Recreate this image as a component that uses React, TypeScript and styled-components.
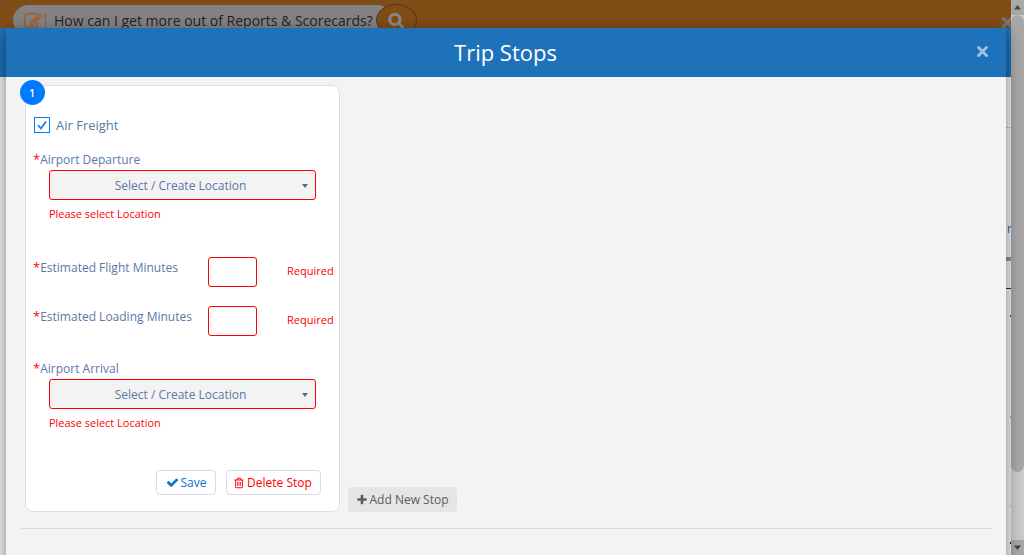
import React from 'react';
import styled, { createGlobalStyle } from 'styled-components';

const GlobalStyle = createGlobalStyle`
  * { box-sizing: border-box; }
  html, body { margin: 0; padding: 0; overflow: hidden; }
  body { font-family: "Open Sans", "Noto Sans", sans-serif; font-size: 12px; color: #5b78a5; }
  button, input { font-family: inherit; font-size: inherit; margin: 0; }
`;

const ICONS = {
  check:
    'M1671 566q0 40-28 68l-724 724-136 136q-28 28-68 28t-68-28l-136-136-362-362q-28-28-28-68t28-68l136-136q28-28 68-28t68 28l294 295 656-657q28-28 68-28t68 28l136 136q28 28 28 68z',
  plus:
    'M1600 736v192q0 40-28 68t-68 28h-416v416q0 40-28 68t-68 28h-192q-40 0-68-28t-28-68v-416h-416q-40 0-68-28t-28-68v-192q0-40 28-68t68-28h416v-416q0-40 28-68t68-28h192q40 0 68 28t28 68v416h416q40 0 68 28t28 68z',
  trash:
    'M704 736v576q0 14-9 23t-23 9h-64q-14 0-23-9t-9-23v-576q0-14 9-23t23-9h64q14 0 23 9t9 23zm256 0v576q0 14-9 23t-23 9h-64q-14 0-23-9t-9-23v-576q0-14 9-23t23-9h64q14 0 23 9t9 23zm256 0v576q0 14-9 23t-23 9h-64q-14 0-23-9t-9-23v-576q0-14 9-23t23-9h64q14 0 23 9t9 23zm128 724v-948h-896v948q0 22 7 40.5t14.5 27 10.5 8.5h832q3 0 10.5-8.5t14.5-27 7-40.5zm-672-1076h448l-48-117q-7-9-17-11h-317q-10 2-17 11zm928 32v64q0 14-9 23t-23 9h-96v948q0 83-47 143.5t-113 60.5h-832q-66 0-113-58.5t-47-141.5v-952h-96q-14 0-23-9t-9-23v-64q0-14 9-23t23-9h309l70-167q15-37 54-63t79-26h320q40 0 79 26t54 63l70 167h309q14 0 23 9t9 23z',
  search:
    'M1216 832q0-185-131.5-316.5t-316.5-131.5-316.5 131.5-131.5 316.5 131.5 316.5 316.5 131.5 316.5-131.5 131.5-316.5zm512 832q0 52-38 90t-90 38q-54 0-90-38l-343-342q-179 124-399 124-143 0-273.5-55.5t-225-150-150-225-55.5-273.5 55.5-273.5 150-225 225-150 273.5-55.5 273.5 55.5 225 150 150 225 55.5 273.5q0 220-124 399l343 343q37 37 37 90z',
  edit:
    'M888 1184l116-116-152-152-116 116v56h96v96h56zm440-720q-16-16-33 1l-350 350q-17 17-1 33t33-1l350-350q17-17 1-33zm80 594v190q0 119-84.5 203.5t-203.5 84.5h-832q-119 0-203.5-84.5t-84.5-203.5v-832q0-119 84.5-203.5t203.5-84.5h832q63 0 117 25 15 7 18 23 3 17-9 29l-49 49q-14 14-32 8-23-6-45-6h-832q-66 0-113 47t-47 113v832q0 66 47 113t113 47h832q66 0 113-47t47-113v-126q0-13 9-22l64-64q15-15 35-7t20 29zm-96-738l288 288-672 672h-288v-288zm444 132l-92 92-288-288 92-92q28-28 68-28t68 28l152 152q28 28 28 68t-28 68z',
};

const Svg = styled.svg`
  display: block;
  flex: none;
  overflow: visible;
  fill: currentColor;
`;

function Icon({ name, size, bold = 0 }: { name: keyof typeof ICONS; size: number; bold?: number }) {
  return (
    <Svg width={size} height={size} viewBox="0 0 1792 1792">
      <path d={ICONS[name]} stroke="currentColor" strokeWidth={bold} />
    </Svg>
  );
}

const CrossSvg = styled.svg`
  display: block;
  flex: none;
`;

function Cross({ color }: { color: string }) {
  return (
    <CrossSvg width="13" height="13" viewBox="0 0 13 13">
      <path d="M2.5 2.5l8 8M10.5 2.5l-8 8" stroke={color} strokeWidth="3" strokeLinecap="round" />
    </CrossSvg>
  );
}

const Window = styled.div`
  position: relative;
  display: flex;
  width: 1024px;
  height: 555px;
  overflow: hidden;
`;

const Page = styled.div`
  flex: 1;
  background: #f4f4f4;
`;

const SiteBar = styled.div`
  display: flex;
  height: 28px;
  padding: 4px 0 0 13px;
  background: #804d17;
  overflow: hidden;
`;

const SearchPill = styled.div`
  display: flex;
  align-items: center;
  width: 380px;
  height: 31px;
  margin-top: 1px;
  padding-left: 11px;
  border-radius: 16px;
  background: #838383;
  color: #a85f30;
`;

const SearchText = styled.span`
  margin-left: 7px;
  padding-left: 1px;
  font-size: 14px;
  line-height: 20px;
  color: #222;
  white-space: nowrap;
`;

const PillRule = styled.span`
  width: 1px;
  height: 16px;
  margin-left: 3px;
  background: #97603b;
`;

const SearchButton = styled.div`
  display: flex;
  flex: none;
  align-items: center;
  justify-content: center;
  width: 41px;
  height: 32px;
  margin-left: -17px;
  padding-right: 2px;
  border: 1px solid #5f3810;
  border-radius: 50%;
  background: #804d17;
  color: #8a8a8a;
`;

const SiteClose = styled.div`
  margin: 12px 0 0 auto;
  width: 10px;
`;

const BackHeader = styled.div`
  height: 49px;
  background: #1e72ba;
`;

const BackBody = styled.div`
  display: flex;
  flex-direction: column;
  align-items: flex-end;
  height: 478px;
`;

const BackMark = styled.div<{ $gap: number; $w: number; $h: number; $color: string }>`
  flex: none;
  width: ${(p) => p.$w}px;
  height: ${(p) => p.$h}px;
  margin-top: ${(p) => p.$gap}px;
  background: ${(p) => p.$color};
`;

const BackLetter = styled.div`
  flex: none;
  width: 4px;
  height: 16px;
  margin-top: 93px;
  overflow: hidden;
  line-height: 16px;
  color: #2b6cb0;
`;

const Scrollbar = styled.div`
  display: flex;
  flex-direction: column;
  width: 13px;
  background: #cbcbcb;
`;

const ScrollArrow = styled.div`
  display: flex;
  align-items: center;
  justify-content: center;
  height: 15px;
  background: #a8a8a8;
`;

const ScrollThumb = styled.div`
  height: 457px;
  margin-bottom: auto;
  border-radius: 7px;
  background: #a8a8a8;
`;

const Modal = styled.section`
  position: absolute;
  top: 28px;
  left: 6px;
  width: 1000px;
  height: 560px;
  background: #f3f3f3;
  box-shadow: 0 5px 15px rgba(0, 0, 0, 0.5);
`;

const ModalHeader = styled.header`
  display: grid;
  grid-template-columns: 1fr auto 1fr;
  align-items: center;
  height: 49px;
  padding: 0 17px 0 16px;
  background: #1e72ba;
`;

const Title = styled.h1`
  grid-column: 2;
  margin: -2px 0 0;
  font-size: 22px;
  font-weight: 400;
  line-height: 30px;
  color: #fff;
`;

const CloseButton = styled.button`
  justify-self: end;
  padding: 0;
  margin-top: -3px;
  border: 0;
  background: none;
`;

const ModalBody = styled.div`
  display: flex;
  align-items: flex-end;
  gap: 8px;
  height: 452px;
  margin: 0 15px;
  padding: 0 0 16px 4px;
  border-bottom: 1px solid #d9d9d9;
`;

const Card = styled.form`
  position: relative;
  width: 315px;
  height: 427px;
  padding: 31px 0 0 8px;
  border: 1px solid #ddd;
  border-radius: 8px;
  background: #fff;
`;

const Badge = styled.span`
  position: absolute;
  top: -6px;
  left: -6px;
  display: flex;
  align-items: center;
  justify-content: center;
  width: 25px;
  height: 25px;
  padding-right: 1px;
  border-radius: 50%;
  background: #007bff;
  color: #fff;
  font-size: 10px;
  font-weight: 600;
`;

const CheckRow = styled.label`
  display: flex;
  align-items: center;
  height: 16px;
  font-size: 13px;
  line-height: 16px;
`;

const Box = styled.span`
  display: flex;
  align-items: center;
  justify-content: center;
  width: 16px;
  height: 16px;
  margin-right: 6px;
  border: 1px solid #007bff;
`;

const LocationField = styled.div<{ $gap: number }>`
  margin-top: ${(p) => p.$gap}px;
`;

const Label = styled.div`
  height: 16px;
  margin-left: -1px;
  line-height: 16px;
  white-space: nowrap;
`;

const Star = styled.span`
  color: #f00;
  font-size: 13px;
`;

const Select = styled.button`
  display: flex;
  align-items: center;
  width: 267px;
  height: 30px;
  margin: 3px 0 0 15px;
  padding: 0 7px 0 9px;
  border: 1px solid #f00;
  border-radius: 3px;
  background: #f3f3f3;
  color: #5b78a5;
`;

const SelectText = styled.span`
  flex: 1;
  text-align: center;
`;

const Caret = styled.span`
  border: 3.5px solid transparent;
  border-top: 4px solid #4a6a9c;
  border-bottom: 0;
  margin-top: 2px;
`;

const ErrorText = styled.div`
  margin: 6px 0 0 15px;
  font-size: 11px;
  line-height: 16px;
  letter-spacing: -0.02px;
  color: #f00;
`;

const NumberRow = styled.div<{ $gap: number }>`
  display: grid;
  grid-template-columns: 174px 79px 1fr;
  height: 30px;
  margin-top: ${(p) => p.$gap}px;
`;

const NumberLabel = styled(Label)`
  margin-top: 2px;
`;

const NumberInput = styled.input`
  width: 49px;
  height: 30px;
  border: 1px solid #f00;
  border-radius: 3px;
  background: #fff;
`;

const Required = styled.span`
  margin-top: 6px;
  font-size: 11px;
  line-height: 16px;
  color: #f00;
`;

const Actions = styled.div`
  display: flex;
  gap: 10px;
  margin: 39px 0 0 122px;
`;

const Button = styled.button<{ $w: number; $tone: string; $muted?: boolean; $pull?: number }>`
  display: flex;
  flex: none;
  align-items: center;
  justify-content: center;
  gap: 2px;
  width: ${(p) => p.$w}px;
  height: 25px;
  padding: 0 ${(p) => p.$pull ?? 1}px 0 0;
  border: 1px solid ${(p) => (p.$muted ? '#e4e4e8' : '#d8dce6')};
  border-radius: 4px;
  background: ${(p) => (p.$muted ? '#e5e5e5' : '#fff')};
  color: ${(p) => p.$tone};
  white-space: nowrap;
`;

function Location({ label, gap }: { label: string; gap: number }) {
  return (
    <LocationField $gap={gap}>
      <Label><Star>*</Star>{label}</Label>
      <Select type="button">
        <SelectText>Select / Create Location</SelectText>
        <Caret />
      </Select>
      <ErrorText>Please select Location</ErrorText>
    </LocationField>
  );
}

function Minutes({ label, gap }: { label: string; gap: number }) {
  return (
    <NumberRow $gap={gap}>
      <NumberLabel><Star>*</Star>{label}</NumberLabel>
      <NumberInput aria-label={label} />
      <Required>Required</Required>
    </NumberRow>
  );
}

export default function App() {
  return (
    <>
      <GlobalStyle />
      <Window>
        <Page>
          <SiteBar>
            <SearchPill>
              <Icon name="edit" size={18} bold={40} />
              <PillRule />
              <SearchText>How can I get more out of Reports &amp; Scorecards?</SearchText>
            </SearchPill>
            <SearchButton><Icon name="search" size={16} bold={90} /></SearchButton>
            <SiteClose><Cross color="#777" /></SiteClose>
          </SiteBar>
          <BackHeader />
          <BackBody>
            <BackMark $gap={50} $w={5} $h={1} $color="#ccc" />
            <BackLetter>n</BackLetter>
            <BackMark $gap={20} $w={5} $h={4} $color="#999" />
            <BackMark $gap={27} $w={5} $h={1} $color="#333" />
            <BackMark $gap={26} $w={1} $h={2} $color="#f00" />
            <BackMark $gap={99} $w={1} $h={2} $color="#f0a000" />
            <BackMark $gap={87} $w={1} $h={2} $color="#9cd0d8" />
            <BackMark $gap={35} $w={1} $h={2} $color="#00a" />
          </BackBody>
        </Page>
        <Scrollbar>
          <ScrollArrow>
            <svg width="7" height="5" viewBox="0 0 7 5"><path d="M3.5 0L7 4.5H0z" fill="#444" /></svg>
          </ScrollArrow>
          <ScrollThumb />
          <ScrollArrow>
            <svg width="7" height="5" viewBox="0 0 7 5"><path d="M0 .5h7L3.5 5z" fill="#444" /></svg>
          </ScrollArrow>
        </Scrollbar>
        <Modal>
          <ModalHeader>
            <Title>Trip Stops</Title>
            <CloseButton aria-label="Close"><Cross color="#9cc2e4" /></CloseButton>
          </ModalHeader>
          <ModalBody>
            <Card>
              <Badge>1</Badge>
              <CheckRow>
                <Box>
                  <svg width="12" height="12" viewBox="0 0 12 12" fill="none">
                    <path d="M2 6l3 3.5L10 2.5" stroke="#1c86e8" strokeWidth="1.9" />
                  </svg>
                </Box>
                Air Freight
              </CheckRow>
              <Location label="Airport Departure" gap={18} />
              <Minutes label="Estimated Flight Minutes" gap={35} />
              <Minutes label="Estimated Loading Minutes" gap={19} />
              <Location label="Airport Arrival" gap={24} />
              <Actions>
                <Button type="button" $w={60} $tone="#0a6fd0" $pull={0}><Icon name="check" size={13} />Save</Button>
                <Button type="button" $w={95} $tone="#f00" $pull={2}><Icon name="trash" size={12} />Delete Stop</Button>
              </Actions>
            </Card>
            <Button type="button" $w={109} $tone="#5c5c5c" $muted><Icon name="plus" size={12} />Add New Stop</Button>
          </ModalBody>
        </Modal>
      </Window>
    </>
  );
}
